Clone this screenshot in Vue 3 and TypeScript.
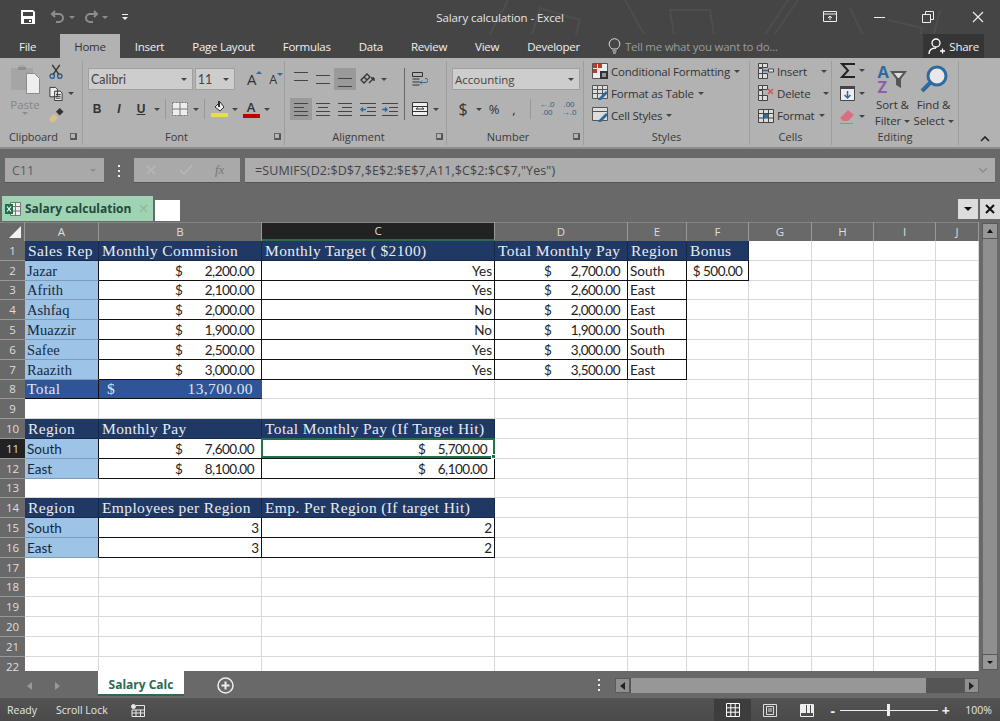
<script setup lang="ts">
type Col = 'A' | 'B' | 'C' | 'D' | 'E' | 'F' | 'G' | 'H' | 'I' | 'J';
type Kind = 'head' | 'name' | 'region' | 'text' | 'num' | 'acct' | 'bonus' | 'total' | 'totalAcct';
type Cell = { v: string; s: Kind };

const cols: Col[] = ['A', 'B', 'C', 'D', 'E', 'F', 'G', 'H', 'I', 'J'];
const rowNums = Array.from({ length: 22 }, (_, i) => i + 1);

const h = (v: string): Cell => ({ v, s: 'head' });
const n = (v: string): Cell => ({ v, s: 'name' });
const r = (v: string): Cell => ({ v, s: 'region' });
const t = (v: string): Cell => ({ v, s: 'text' });
const num = (v: string): Cell => ({ v, s: 'num' });
const a = (v: string): Cell => ({ v, s: 'acct' });

const sheet: Record<number, Partial<Record<Col, Cell>>> = {
  1: { A: h('Sales Rep'), B: h('Monthly Commision'), C: h('Monthly Target ( $2100)'), D: h('Total Monthly Pay'), E: h('Region'), F: h('Bonus') },
  2: { A: n('Jazar'), B: a('2,200.00'), C: num('Yes'), D: a('2,700.00'), E: t('South'), F: { v: '$ 500.00', s: 'bonus' } },
  3: { A: n('Afrith'), B: a('2,100.00'), C: num('Yes'), D: a('2,600.00'), E: t('East') },
  4: { A: n('Ashfaq'), B: a('2,000.00'), C: num('No'), D: a('2,000.00'), E: t('East') },
  5: { A: n('Muazzir'), B: a('1,900.00'), C: num('No'), D: a('1,900.00'), E: t('South') },
  6: { A: n('Safee'), B: a('2,500.00'), C: num('Yes'), D: a('3,000.00'), E: t('South') },
  7: { A: n('Raazith'), B: a('3,000.00'), C: num('Yes'), D: a('3,500.00'), E: t('East') },
  8: { A: { v: 'Total', s: 'total' }, B: { v: '13,700.00', s: 'totalAcct' } },
  10: { A: h('Region'), B: h('Monthly Pay'), C: h('Total Monthly Pay (If Target Hit)') },
  11: { A: r('South'), B: a('7,600.00'), C: a('5,700.00') },
  12: { A: r('East'), B: a('8,100.00'), C: a('6,100.00') },
  14: { A: h('Region'), B: h('Employees per Region'), C: h('Emp. Per Region (If target Hit)') },
  15: { A: r('South'), B: num('3'), C: num('2') },
  16: { A: r('East'), B: num('3'), C: num('2') },
};

const cellAt = (row: number, col: Col): Cell | undefined => sheet[row]?.[col];
const isSelected = (row: number, col: Col) => row === 11 && col === 'C';

const tabs = ['Insert', 'Page Layout', 'Formulas', 'Data', 'Review', 'View', 'Developer'];
</script>

<template>
  <div class="excel">
    <header class="titlebar">
      <svg class="doodles" viewBox="0 0 560 58" width="560" height="58" fill="none" stroke="#fff" stroke-opacity=".05" stroke-width="2">
        <path d="M70 34l18-34M120 8l40 12-10 34-40-12zM205 0l28 50M250 10h40l8 48h-40zM330 58l38-58M352 58l-10 4 2-12 34-50M430 8l24 50M520 10l-12 48M468 20l34 8-6 30" />
      </svg>
      <div class="qat">
        <svg width="16" height="16" viewBox="0 0 16 16" class="qat-save"><path fill="#fff" d="M1 1h12l2 2v12H1zM3 3v4h10V3zm1 7v4h8v-4zm5 1h2v2H9z" fill-rule="evenodd" /></svg>
        <svg width="16" height="14" viewBox="0 0 16 14" fill="none" stroke="#8d8d8d" stroke-width="2"><path d="M5 1L2 4l3 3M2 4h7a4 4 0 0 1 0 8H6" /></svg>
        <i class="caret caret--dim"></i>
        <svg width="16" height="14" viewBox="0 0 16 14" fill="none" stroke="#8d8d8d" stroke-width="2"><path d="M11 1l3 3-3 3M14 4H7a4 4 0 0 0 0 8h3" /></svg>
        <i class="caret caret--dim"></i>
        <span class="qat-more"><b></b><i class="caret caret--light"></i></span>
      </div>
      <div class="title">Salary calculation - Excel</div>
      <div class="win">
        <svg width="14" height="12" viewBox="0 0 14 12" fill="none" stroke="#eee"><path d="M.5.5h13v10H.5zM.5 3h13" /><path d="M7 9V5M5 7l2-2 2 2" /></svg>
        <span class="win-min"></span>
        <svg width="12" height="12" viewBox="0 0 12 12" fill="none" stroke="#eee"><path d="M.5 3.5h8v8h-8zM3.5 3V.5h8v8H9" /></svg>
        <svg width="14" height="14" viewBox="0 0 14 14" fill="none" stroke="#eee" stroke-width="1.2"><path d="M2 2l10 10M12 2L2 12" /></svg>
      </div>
    </header>

    <nav class="tabs">
      <span class="tab tab--file">File</span>
      <span class="tab tab--active">Home</span>
      <span v-for="tab in tabs" :key="tab" class="tab">{{ tab }}</span>
      <span class="tell">
        <svg width="13" height="17" viewBox="0 0 13 17" fill="none" stroke="#ddd"><path d="M4 11C2 9 1.2 8 1.2 6a5.3 5.3 0 0 1 10.6 0c0 2-.8 3-2.8 5zM4.5 13h4M5 15h3" /></svg>
        <span>Tell me what you want to do...</span>
      </span>
      <span class="share">
        <svg width="18" height="17" viewBox="0 0 18 17" fill="none" stroke="#fff" stroke-width="1.3"><circle cx="8" cy="5" r="4" /><path d="M1 16c0-4 3-6 7-6M12 13h5M14.5 10.5v5" /></svg>
        Share
      </span>
    </nav>

    <div class="ribbon">
      <section class="group g-clip">
        <div class="body body--clip">
          <div class="paste">
            <svg width="30" height="30" viewBox="0 0 30 30"><path fill="#a5a5a5" d="M1 4h7a4 3 0 0 1 8 0h7v22H1z" /><path fill="#8f8f8f" d="M8 3h8v3H8z" /><path fill="#eee" stroke="#8b8b8b" d="M16.5 9.5h8l5 5v15h-13z" /></svg>
            <span class="paste-label">Paste</span>
            <i class="caret caret--dim"></i>
          </div>
          <div class="clip-tools">
            <svg width="16" height="15" viewBox="0 0 16 16" fill="none" stroke="#2f5f88" stroke-width="1.5"><circle cx="4" cy="13" r="2.3" /><circle cx="12" cy="13" r="2.3" /><path stroke="#333" d="M5 11L12 1M11 11L4 1" /></svg>
            <span class="row-inline">
              <svg width="16" height="15" viewBox="0 0 16 16" fill="#eee" stroke="#333"><path d="M1.5 1.5h6l2 2v8h-8zM6.5 5.5h6l2 2v8h-8z" /><path d="M8 9h5M8 11h5M8 13h5" /></svg>
              <i class="caret"></i>
            </span>
            <svg width="16" height="15" viewBox="0 0 16 16"><path fill="#d9c08c" d="M1 11l5-5 4 4-4 5H2z" /><path fill="#333" d="M9 3l3-3 4 4-3 3-1 1-4-4z" /></svg>
          </div>
        </div>
        <div class="label label--clip">Clipboard<i class="launcher"></i></div>
      </section>

      <section class="group g-font">
        <div class="body body--font">
          <div class="row">
            <div class="combo combo--font"><span>Calibri</span><i class="caret"></i></div>
            <div class="combo combo--size"><span>11</span><i class="caret"></i></div>
            <span class="grow-a">A<i class="up"></i></span>
            <span class="grow-a grow-a--small">A<i class="up up--down"></i></span>
          </div>
          <div class="row row--second">
            <span class="btn fmt"><b>B</b></span>
            <span class="btn fmt"><b><em>I</em></b></span>
            <span class="btn fmt"><b><u>U</u></b></span>
            <span class="cbtn"><i class="caret"></i></span>
            <span class="sep sep--sm"></span>
            <span class="btn">
              <svg width="16" height="14" viewBox="0 0 16 14"><path fill="#eee" stroke="#777" stroke-dasharray="2 1" d="M.5.5h15v13H.5z" /><path stroke="#777" d="M8 0v14M0 7h16" /></svg>
            </span>
            <span class="cbtn"><i class="caret"></i></span>
            <span class="sep sep--sm"></span>
            <span class="btn btn--stack">
              <svg width="14" height="12" viewBox="0 0 14 12"><path fill="#eee" stroke="#333" d="M3 6l5-5 4 5-4 4z" /><path fill="#333" d="M6 0h2v6H6z" /></svg>
              <i class="swatch swatch--yellow"></i>
            </span>
            <span class="cbtn"><i class="caret"></i></span>
            <span class="btn btn--stack">
              <span class="font-a">A</span>
              <i class="swatch swatch--red"></i>
            </span>
            <span class="cbtn"><i class="caret"></i></span>
          </div>
        </div>
        <div class="label label--launch">Font<i class="launcher"></i></div>
      </section>

      <section class="group g-align">
        <div class="body body--align">
          <div class="align-left">
            <div class="row">
              <span class="btn"><i class="lines lines--top"></i></span>
              <span class="btn"><i class="lines lines--mid"></i></span>
              <span class="btn btn--on"><i class="lines lines--bot"></i></span>
              <span class="btn btn--gapped">
                <svg width="16" height="14" viewBox="0 0 16 14" fill="none" stroke="#333" stroke-width="1.3"><path d="M1 8l6-6 3 3-6 6zM4 5l3 3M9 11l5-5M14 6v3M14 6h-3" /></svg>
              </span>
              <span class="cbtn"><i class="caret"></i></span>
            </div>
            <div class="row row--second">
              <span class="btn btn--on"><i class="lines lines--left"></i></span>
              <span class="btn"><i class="lines lines--center"></i></span>
              <span class="btn"><i class="lines lines--right"></i></span>
              <span class="btn btn--gapped">
                <svg width="16" height="13" viewBox="0 0 16 13" fill="none" stroke="#444"><path d="M0 .5h16M7 4.5h9M7 8.5h9M0 12.5h16" /><path stroke="#2f6a9f" stroke-width="1.5" d="M6 6.5H1M3 4.5l-2 2 2 2" /></svg>
              </span>
              <span class="btn">
                <svg width="16" height="13" viewBox="0 0 16 13" fill="none" stroke="#444"><path d="M0 .5h16M7 4.5h9M7 8.5h9M0 12.5h16" /><path stroke="#2f6a9f" stroke-width="1.5" d="M0 6.5h5M3 4.5l2 2-2 2" /></svg>
              </span>
            </div>
          </div>
          <span class="sep sep--tall"></span>
          <div class="align-right">
            <span class="btn">
              <svg width="16" height="15" viewBox="0 0 16 15" fill="none" stroke="#333"><path d="M.5.5h10v4H.5zM.5 7h7M.5 10h7M.5 13h7" /><path stroke="#2f6a9f" d="M8 10.5h6a1.5 1.5 0 0 0 0-4h-1M10 8.5l-2 2 2 2" /></svg>
            </span>
            <span class="row-inline row-inline--down">
              <span class="btn">
                <svg width="16" height="14" viewBox="0 0 16 14" fill="#eee" stroke="#333"><path d="M.5.5h15v13H.5zM.5 4.5h15M.5 9.5h15" /><path d="M4 7h8M4 7l2-1.5M12 7l-2-1.5" /></svg>
              </span>
              <span class="cbtn"><i class="caret"></i></span>
            </span>
          </div>
        </div>
        <div class="label label--launch">Alignment<i class="launcher"></i></div>
      </section>

      <section class="group g-number">
        <div class="body body--number">
          <div class="combo combo--number"><span>Accounting</span><i class="caret"></i></div>
          <div class="row row--second">
            <span class="btn sym">$</span>
            <span class="cbtn"><i class="caret"></i></span>
            <span class="btn btn--narrow sym sym--small">%</span>
            <span class="btn btn--narrow sym sym--small">,</span>
            <span class="sep sep--num"></span>
            <span class="btn dec"><b>←.0</b><b>.00</b></span>
            <span class="btn dec"><b>.00</b><b>→.0</b></span>
          </div>
        </div>
        <div class="label label--launch">Number<i class="launcher"></i></div>
      </section>

      <section class="group g-styles">
        <div class="body body--list">
          <span class="item">
            <svg width="16" height="16" viewBox="0 0 16 16" fill="#eee" stroke="#555"><path d="M.5.5h15v15H.5z" /><path fill="#c0392b" stroke="none" d="M1 1h4v4H1zM1 6h4v4H1zM6 1h4v4H6z" /><path fill="#333" stroke="none" d="M8 8h8v8H8z" /><path stroke="#fff" d="M10 11h4M10 13h4" /></svg>
            Conditional Formatting<i class="caret caret--sm"></i>
          </span>
          <span class="item">
            <svg width="16" height="16" viewBox="0 0 16 16" fill="#ddd" stroke="#555"><path d="M.5.5h15v13H.5z" /><path d="M.5 4.5h15M.5 8.5h15M5.5.5v13M10.5.5v13" /><path fill="#2f6a9f" stroke="none" d="M7 13l7-7 2 2-7 7H6z" /></svg>
            Format as Table<i class="caret caret--sm"></i>
          </span>
          <span class="item">
            <svg width="16" height="16" viewBox="0 0 16 16" fill="#ddd" stroke="#555"><path d="M.5.5h15v13H.5z" /><path d="M.5 4.5h15" /><path fill="#2f6a9f" stroke="none" d="M7 13l7-7 2 2-7 7H6z" /></svg>
            Cell Styles<i class="caret caret--sm"></i>
          </span>
        </div>
        <div class="label">Styles</div>
      </section>

      <section class="group g-cells">
        <div class="body body--list">
          <span class="item">
            <svg width="16" height="16" viewBox="0 0 16 16" fill="#ddd" stroke="#444"><path d="M.5.5h4v4h-4zM.5 5.5h4v5h-4zM.5 10.5h4v5h-4zM4.5 10.5h5v5h-5zM4.5.5h5v4h-5z" /><path stroke="#2f6a9f" stroke-width="1.5" d="M5 7.5h5" /><path fill="#eee" d="M10.5 6h5v3h-5z" /></svg>
            Insert<i class="caret caret--far"></i>
          </span>
          <span class="item">
            <svg width="16" height="16" viewBox="0 0 16 16" fill="#ddd" stroke="#444"><path d="M.5.5h4v4h-4zM.5 5.5h4v5h-4zM.5 10.5h4v5h-4zM4.5 10.5h5v5h-5zM4.5.5h5v4h-5z" /><path stroke="#d9534f" stroke-width="1.5" d="M10 4l5 5M15 4l-5 5" /></svg>
            Delete<i class="caret caret--far2"></i>
          </span>
          <span class="item">
            <svg width="16" height="16" viewBox="0 0 16 16" fill="#ddd" stroke="#444"><path d="M.5 2.5h15v13H.5zM.5 6.5h15M.5 11h15M5.5 2.5v13M10.5 2.5v13" /><path fill="#2f6a9f" stroke="none" d="M6 7h4v4H6z" /></svg>
            Format<i class="caret caret--sm"></i>
          </span>
        </div>
        <div class="label">Cells</div>
      </section>

      <section class="group g-edit">
        <div class="body body--edit">
          <div class="edit-tools">
            <span class="row-inline">
              <svg width="15" height="15" viewBox="0 0 15 15" fill="none" stroke="#222" stroke-width="2"><path d="M14 2V1H2l6 6.5L2 14h12v-1" /></svg>
              <i class="caret"></i>
            </span>
            <span class="row-inline">
              <svg width="15" height="15" viewBox="0 0 15 15"><path fill="#eee" stroke="#444" d="M.5.5h14v14H.5z" /><path fill="#444" d="M0 0h15v3H0z" /><path stroke="#2f6a9f" stroke-width="1.5" fill="none" d="M7.5 5v7M4.5 9l3 3 3-3" /></svg>
              <i class="caret"></i>
            </span>
            <span class="row-inline">
              <svg width="15" height="15" viewBox="0 0 15 15"><path fill="#d9707f" d="M0 9l8-8 6 5-6 6H3z" /><path stroke="#d9707f" d="M0 14.5h13" /></svg>
              <i class="caret"></i>
            </span>
          </div>
          <div class="big">
            <span class="sort-icon">
              <span class="az"><b class="az-a">A</b><b class="az-z">Z</b></span>
              <svg width="17" height="17" viewBox="0 0 17 17"><path fill="#555" d="M0 0h17l-6 8v9l-5-3V8z" /><path fill="#ddd" d="M4 2h9l-4 5H8z" /></svg>
            </span>
            <span class="big-text">Sort &amp;</span>
            <span class="big-text">Filter<i class="caret caret--sm"></i></span>
          </div>
          <div class="big">
            <svg class="big-icon" width="30" height="30" viewBox="0 0 30 30" fill="none"><path stroke="#2f6a9f" stroke-width="4" d="M11 19L3 27" /><circle cx="18" cy="12" r="9" fill="#e8e8e8" stroke="#2f6a9f" stroke-width="3" /></svg>
            <span class="big-text">Find &amp;</span>
            <span class="big-text">Select<i class="caret caret--sm"></i></span>
          </div>
        </div>
        <div class="label">Editing</div>
      </section>

      <span class="collapse"><svg width="10" height="6" viewBox="0 0 10 6" fill="none" stroke="#222" stroke-width="1.6"><path d="M1 5l4-4 4 4" /></svg></span>
    </div>

    <div class="formula">
      <div class="namebox"><span>C11</span><i class="caret caret--dim"></i></div>
      <span class="dots"><b></b><b></b><b></b></span>
      <div class="fxbox">
        <svg width="12" height="12" viewBox="0 0 12 12" fill="none" stroke="#b8b8b8" stroke-width="1.5"><path d="M2 2l8 8M10 2l-8 8" /></svg>
        <svg width="14" height="12" viewBox="0 0 14 12" fill="none" stroke="#b8b8b8" stroke-width="1.5"><path d="M1 6l4 4 8-9" /></svg>
        <em>fx</em>
      </div>
      <div class="fbar"><span>=SUMIFS(D2:$D$7,$E$2:$E$7,A11,$C$2:$C$7,"Yes")</span><svg width="10" height="6" viewBox="0 0 10 6" fill="none" stroke="#8c8c8c" stroke-width="1.4"><path d="M1 1l4 4 4-4" /></svg></div>
    </div>

    <div class="docbar">
      <div class="doctab">
        <svg width="16" height="14" viewBox="0 0 16 14"><path fill="#eee" stroke="#777" d="M5.5.5h10v13h-10z" /><path stroke="#777" d="M10.5 1v12M6 4.5h9M6 9h9" /><path fill="#1e7145" d="M0 2h8v10H0z" /><path stroke="#fff" stroke-width="1.2" d="M2 4.5l4 5M6 4.5l-4 5" /></svg>
        <span class="doctab-name">Salary calculation</span>
        <svg class="doctab-x" width="9" height="9" viewBox="0 0 9 9" fill="none" stroke="#8dbca0" stroke-width="1.5"><path d="M1 1l7 7M8 1L1 8" /></svg>
      </div>
      <div class="newdoc"></div>
      <div class="docbtns">
        <span class="docbtn"><i class="caret caret--black"></i></span>
        <span class="docbtn"><svg width="10" height="10" viewBox="0 0 10 10" fill="none" stroke="#111" stroke-width="2"><path d="M1 1l8 8M9 1L1 9" /></svg></span>
      </div>
    </div>

    <div class="sheetwrap">
      <div class="grid">
        <div class="colhead colhead--corner"><i></i></div>
        <div v-for="col in cols" :key="col" class="colhead" :class="{ 'colhead--active': col === 'C' }">{{ col }}</div>
        <template v-for="row in rowNums" :key="row">
          <div class="rowhead" :class="{ 'rowhead--active': row === 11 }">{{ row }}</div>
          <div
            v-for="col in cols"
            :key="col"
            class="cell"
            :class="[cellAt(row, col) ? `cell--${cellAt(row, col)!.s}` : '', `cell--col-${col}`]"
          >
            <template v-if="cellAt(row, col)?.s === 'acct' || cellAt(row, col)?.s === 'totalAcct'">
              <span>$</span><span class="amount">{{ cellAt(row, col)!.v }}</span>
            </template>
            <template v-else>{{ cellAt(row, col)?.v }}</template>
            <span v-if="isSelected(row, col)" class="selection"><i></i></span>
          </div>
        </template>
      </div>
      <div class="vscroll">
        <span class="sbtn"><i class="caret caret--up"></i></span>
        <span class="vtrack"></span>
        <span class="sbtn"><i class="caret caret--black"></i></span>
      </div>
    </div>

    <div class="sheetbar">
      <span class="navarrows"><i class="tri tri--l"></i><i class="tri tri--r"></i></span>
      <span class="sheettab">Salary Calc</span>
      <svg class="addsheet" width="17" height="17" viewBox="0 0 17 17" fill="none" stroke="#eee" stroke-width="1.5"><circle cx="8.5" cy="8.5" r="7.5" /><path stroke-width="2" d="M8.5 4.5v8M4.5 8.5h8" /></svg>
      <span class="dots dots--bar"><b></b><b></b><b></b></span>
      <div class="hscroll">
        <span class="hbtn"><i class="tri tri--dark-l"></i></span>
        <span class="hthumb"></span>
        <span class="hrest"></span>
        <span class="hbtn"><i class="tri tri--dark-r"></i></span>
      </div>
    </div>

    <footer class="status">
      <span class="st-text">Ready</span>
      <span class="st-text st-text--lock">Scroll Lock</span>
      <svg class="st-macro" width="14" height="13" viewBox="0 0 14 13" fill="none" stroke="#e8e8e8"><circle cx="2.5" cy="2.5" r="2" fill="#e8e8e8" /><path d="M5 1.5h8.5v11H1V6h12.5M1 9h12.5M5 6v6.5M9.5 6v6.5" /></svg>
      <div class="views">
        <span class="view view--on">
          <svg width="14" height="14" viewBox="0 0 14 14" fill="none" stroke="#fff"><path d="M.5.5h13v13H.5zM.5 4.8h13M.5 9.2h13M4.8.5v13M9.2.5v13" /></svg>
        </span>
        <span class="view">
          <svg width="14" height="13" viewBox="0 0 14 13" fill="none" stroke="#ddd"><path d="M.5.5h13v12H.5z" /><path d="M3.5 2.5h7v8h-7zM5 5h4M5 7h4" /></svg>
        </span>
        <span class="view">
          <svg width="14" height="13" viewBox="0 0 14 13"><path fill="none" stroke="#eee" d="M.5.5h13v12H.5z" /><path fill="#eee" d="M1 1h5v8H1zM7 1h3v8H7zM11 1h2v8h-2z" /></svg>
        </span>
      </div>
      <div class="zoom">
        <span class="zbtn">-</span>
        <span class="slider"><i></i></span>
        <span class="zbtn">+</span>
      </div>
      <span class="pct">100%</span>
    </footer>
  </div>
</template>

<style>
html,
body {
  margin: 0;
  background: #696969;
}
</style>

<style scoped>
.excel {
  position: relative;
  width: 1000px;
  height: 721px;
  display: flex;
  flex-direction: column;
  overflow: hidden;
  background: #696969;
  font-family: 'Open Sans', 'Liberation Sans', sans-serif;
  font-size: 12px;
  color: #333;
}

/* TITLE BAR */
.titlebar {
  position: relative;
  height: 34px;
  flex: none;
  display: grid;
  grid-template-columns: 1fr auto 1fr;
  align-items: center;
  background: #454545;
}
.doodles {
  position: absolute;
  top: 0;
  right: 20px;
}
.qat {
  display: flex;
  align-items: center;
  gap: 3px;
  padding-left: 20px;
}
.qat-save {
  margin-right: 11px;
}
.qat .caret--dim + svg {
  margin-left: 5px;
}
.qat-more {
  display: flex;
  flex-direction: column;
  align-items: center;
  gap: 2px;
  margin-left: 11px;
}
.qat-more b {
  width: 6px;
  height: 1px;
  background: #eee;
}
.title {
  color: #e6e6e6;
  font-size: 11.5px;
  letter-spacing: -0.1px;
  position: relative;
}
.win {
  position: relative;
  display: flex;
  justify-content: flex-end;
  align-items: center;
  gap: 37px;
  padding-right: 15px;
}
.win-min {
  width: 11px;
  height: 1px;
  background: #eee;
}

/* TABS */
.tabs {
  position: relative;
  height: 24px;
  flex: none;
  display: flex;
  align-items: stretch;
  background: #454545;
  color: #f0f0f0;
  font-size: 11.5px;
  letter-spacing: -0.25px;
}
.tab {
  display: flex;
  align-items: center;
  padding: 0 14px;
}
.tab--file {
  margin-left: 5px;
  margin-right: 10px;
}
.tab--active {
  padding: 0 14px;
  margin-right: 1px;
  background: #b2b2b2;
  color: #333;
}
.tell {
  display: flex;
  align-items: center;
  gap: 4px;
  margin-left: 14px;
  color: #9b9b9b;
}
.share {
  display: flex;
  align-items: center;
  gap: 3px;
  margin-left: auto;
  margin-right: 16px;
  padding: 0 5px;
  background: #353535;
  color: #f2f2f2;
}

/* RIBBON */
.ribbon {
  position: relative;
  height: 91px;
  flex: none;
  display: flex;
  box-sizing: border-box;
  padding-top: 3px;
  background: #b2b2b2;
  border-bottom: 2px solid #8d8d8d;
}
.group {
  flex: none;
  display: flex;
  flex-direction: column;
  height: 84px;
  box-sizing: border-box;
  border-right: 1px solid #9e9e9e;
}
.g-clip { width: 83px; }
.g-font { width: 202px; }
.g-align { width: 162px; }
.g-number { width: 137px; }
.g-styles { width: 166px; }
.g-cells { width: 82px; }
.g-edit { width: 127px; }
.body {
  flex: 1;
  min-height: 0;
}
.label {
  position: relative;
  height: 16px;
  line-height: 16px;
  text-align: center;
  font-size: 11px;
  color: #3a3a3a;
}
.label--launch {
  padding-right: 14px;
}
.label--clip {
  text-align: left;
  padding-left: 9px;
  letter-spacing: -0.1px;
}
.launcher {
  position: absolute;
  right: 3px;
  top: 4px;
  width: 6px;
  height: 6px;
  border-left: 1px solid #666;
  border-top: 1px solid #666;
  box-shadow: inset -3px -3px 0 -1px #555;
}
.label--clip .launcher {
  right: 5px;
}
.collapse {
  position: absolute;
  right: 10px;
  bottom: 5px;
  line-height: 0;
}
.row {
  display: flex;
  align-items: center;
  height: 22px;
}
.row--second {
  margin-top: 8px;
}
.row-inline {
  display: flex;
  align-items: center;
  gap: 4px;
}
.btn {
  flex: none;
  width: 22px;
  height: 22px;
  display: flex;
  align-items: center;
  justify-content: center;
}
.btn--narrow {
  width: 20px;
}
.btn--on {
  background: #9a9a9a;
}
.btn--gapped {
  margin-left: 1px;
}
.btn--stack {
  flex-direction: column;
  gap: 0;
}
.cbtn {
  flex: none;
  width: 10px;
  display: flex;
  justify-content: center;
}
.sep {
  flex: none;
  width: 1px;
  background: #989898;
}
.sep--sm {
  height: 20px;
  margin: 0 3px;
}
.sep--tall {
  height: 52px;
  margin: 0 4px 0 3px;
  background: #666;
}
.sep--num {
  height: 20px;
  margin: 0 5px 0 6px;
}

/* CARETS */
.caret {
  display: inline-block;
  width: 0;
  height: 0;
  border-left: 3px solid transparent;
  border-right: 3px solid transparent;
  border-top: 3px solid #444;
}
.caret--dim { border-top-color: #8d8d8d; }
.caret--light { border-top-color: #eee; }
.caret--black { border-top-color: #111; }
.caret--up {
  border-top: 0;
  border-bottom: 4px solid #111;
}

/* CLIPBOARD */
.body--clip {
  display: flex;
  padding: 3px 0 0 9px;
}
.paste {
  width: 32px;
  display: flex;
  flex-direction: column;
  align-items: center;
  color: #868686;
  font-size: 11.5px;
}
.paste-label {
  margin-top: 3px;
}
.clip-tools {
  display: flex;
  flex-direction: column;
  gap: 7px;
  padding-left: 7px;
}

/* FONT */
.body--font {
  padding: 7px 0 0 3px;
}
.combo {
  display: flex;
  align-items: center;
  justify-content: space-between;
  box-sizing: border-box;
  height: 22px;
  padding: 0 5px 0 2px;
  background: #cdcdcd;
  border: 1px solid #a0a0a0;
  font-family: 'Lato', sans-serif;
  font-size: 12.5px;
  color: #444;
}
.combo--font {
  width: 107px;
  margin-left: 2px;
}
.combo--size {
  width: 41px;
  margin: 0 6px 0 2px;
}
.combo--number {
  width: 128px;
  font-family: 'Open Sans', sans-serif;
  font-size: 11.5px;
}
.grow-a {
  position: relative;
  width: 22px;
  text-align: center;
  font-size: 15px;
  color: #333;
}
.grow-a--small {
  font-size: 12.5px;
}
.up {
  position: absolute;
  right: 1px;
  top: 2px;
  border-left: 3px solid transparent;
  border-right: 3px solid transparent;
  border-bottom: 3px solid #2f6a9f;
}
.up--down {
  border-bottom: 0;
  border-top: 3px solid #2f6a9f;
}
.fmt {
  font-family: 'Liberation Sans', sans-serif;
  font-size: 12px;
}
.swatch {
  width: 17px;
  height: 4px;
}
.swatch--yellow { background: #e6e23a; }
.swatch--red { background: #c00000; }
.font-a {
  font-size: 13px;
  line-height: 13px;
  font-weight: 600;
}

/* ALIGNMENT */
.body--align {
  display: flex;
  padding: 7px 0 0 5px;
}
.lines {
  display: block;
  width: 14px;
  height: 9px;
  box-sizing: border-box;
  border-top: 1px solid #444;
  border-bottom: 1px solid #444;
}
.lines--top { margin-bottom: 6px; }
.lines--bot { margin-top: 6px; }
.lines--left,
.lines--center,
.lines--right {
  height: 13px;
  background: linear-gradient(#444, #444) 0 3px / 10px 1px no-repeat, linear-gradient(#444, #444) 0 7px / 14px 1px no-repeat;
  border-top: 1px solid #444;
  border-bottom: 1px solid #444;
}
.lines--center {
  background-position: 2px 3px, 0 7px;
}
.lines--right {
  background-position: 4px 3px, 0 7px;
}
.align-right {
  display: flex;
  flex-direction: column;
  align-items: flex-start;
  gap: 8px;
}
.row-inline--down {
  gap: 0;
}

/* NUMBER */
.body--number {
  padding: 7px 0 0 5px;
}
.sym {
  font-size: 16px;
  color: #333;
}
.sym--small {
  font-size: 13px;
}
.dec {
  flex-direction: column;
  font-family: 'Liberation Sans', sans-serif;
  font-size: 8px;
  line-height: 8px;
  color: #2f5f88;
}
.dec b {
  font-weight: 400;
}

/* STYLES AND CELLS */
.body--list {
  display: flex;
  flex-direction: column;
  padding-left: 8px;
  margin-top: -1px;
}
.item {
  display: flex;
  align-items: center;
  gap: 3px;
  height: 22px;
  font-size: 11.5px;
  letter-spacing: -0.2px;
  white-space: nowrap;
}
.item .caret {
  margin-left: 1px;
}
.item .caret--far { margin-left: 11px; }
.item .caret--far2 { margin-left: 9px; }

/* EDITING */
.body--edit {
  display: flex;
}
.edit-tools {
  width: 40px;
  display: flex;
  flex-direction: column;
  gap: 8px;
  padding: 2px 0 0 8px;
  box-sizing: border-box;
}
.big {
  width: 41px;
  display: flex;
  flex-direction: column;
  align-items: center;
  font-size: 11.5px;
  line-height: 16px;
  letter-spacing: -0.1px;
  white-space: nowrap;
}
.big-icon,
.sort-icon {
  flex: none;
  height: 30px;
  margin: 3px 0 3px;
}
.big-text {
  flex: none;
}
.big-text .caret {
  margin-left: 3px;
  vertical-align: 2px;
}
.sort-icon {
  width: 30px;
  display: flex;
  align-items: center;
}
.az {
  display: flex;
  flex-direction: column;
  width: 12px;
  font-size: 16.5px;
  line-height: 15px;
}
.az-a { color: #2f6a9f; }
.az-z { color: #8d5fa8; }

/* FORMULA BAR */
.formula {
  height: 47px;
  flex: none;
  display: flex;
  align-items: flex-start;
  box-sizing: border-box;
  padding: 9px 5px 0;
}
.namebox,
.fxbox,
.fbar {
  height: 25px;
  box-sizing: border-box;
  display: flex;
  align-items: center;
  background: #a9a9a9;
  border-bottom: 1px solid #555;
}
.namebox {
  width: 99px;
  justify-content: space-between;
  padding: 0 8px 0 7px;
  color: #5c5c5c;
  font-size: 12.5px;
}
.dots {
  display: flex;
  flex-direction: column;
  align-items: center;
  gap: 3px;
  width: 30px;
  padding-top: 7px;
}
.dots b {
  width: 2px;
  height: 2px;
  background: #eee;
}
.fxbox {
  width: 106px;
  gap: 22px;
  padding-left: 11px;
  color: #777;
}
.fxbox em {
  font-family: 'Liberation Serif', serif;
  font-size: 13px;
}
.fbar {
  flex: 1;
  margin-left: 5px;
  justify-content: space-between;
  padding: 0 7px 0 10px;
  font-size: 12.5px;
  letter-spacing: 0.1px;
  color: #444;
  background: #acacac;
}

/* DOCUMENT TAB */
.docbar {
  height: 26px;
  flex: none;
  display: flex;
  align-items: flex-end;
  padding-left: 2px;
}
.doctab {
  width: 151px;
  height: 25px;
  margin-bottom: 1px;
  box-sizing: border-box;
  display: flex;
  align-items: center;
  gap: 4px;
  padding-left: 3px;
  background: #a0d2b4;
}
.doctab-name {
  font-weight: 700;
  font-size: 12px;
  color: #214a3c;
  white-space: nowrap;
}
.doctab-x {
  margin-left: 4px;
}
.newdoc {
  width: 25px;
  height: 21px;
  margin: 0 0 1px 2px;
  background: #fff;
}
.docbtns {
  display: flex;
  gap: 2px;
  margin-left: auto;
  margin-bottom: 3px;
}
.docbtn {
  width: 20px;
  height: 20px;
  display: flex;
  align-items: center;
  justify-content: center;
  background: #dcdcdc;
}
.docbtn .caret {
  border-left-width: 4px;
  border-right-width: 4px;
  border-top-width: 4px;
}

/* SHEET */
.sheetwrap {
  height: 449px;
  flex: none;
  display: flex;
  background: #696969;
}
.grid {
  width: 979px;
  height: 449px;
  flex: none;
  overflow: hidden;
  display: grid;
  grid-template-columns: 25px 74px 163px 233px 133px 59px 62px 63px 62px 62px 43px;
  grid-template-rows: 19px;
  grid-auto-rows: 19.8px;
  background: #fff;
  font-family: 'Lato', 'Liberation Sans', sans-serif;
  font-size: 13.5px;
  color: #222;
}
.colhead {
  display: flex;
  align-items: center;
  justify-content: center;
  box-sizing: border-box;
  background: #696969;
  border-right: 1px solid #999;
  box-shadow: inset 0 1px #858585;
  color: #dedede;
  font-family: 'Open Sans', sans-serif;
  font-size: 11.5px;
}
.colhead--corner {
  position: relative;
}
.colhead--corner i {
  position: absolute;
  right: 3px;
  bottom: 3px;
  border-left: 12px solid transparent;
  border-bottom: 12px solid #f2f2f2;
}
.colhead--active {
  background: #222;
  border-bottom: 2px solid #2c6a50;
}
.rowhead {
  display: flex;
  align-items: center;
  justify-content: center;
  box-sizing: border-box;
  padding-top: 1px;
  background: #696969;
  border-bottom: 1px solid #999;
  color: #dedede;
  font-family: 'Open Sans', sans-serif;
  font-size: 11.5px;
  line-height: 14px;
}
.rowhead--active {
  background: #222;
}
.cell {
  position: relative;
  display: flex;
  align-items: flex-end;
  box-sizing: border-box;
  padding: 0 2px;
  line-height: 18px;
  border-right: 1px solid #d9d9d9;
  border-bottom: 1px solid #d9d9d9;
  white-space: nowrap;
  min-width: 0;
}
.cell--head,
.cell--total,
.cell--totalAcct {
  font-family: 'Liberation Serif', serif;
  font-size: 15.5px;
  letter-spacing: 0.38px;
}
.cell--name {
  font-family: 'Liberation Serif', serif;
  font-size: 14.5px;
  letter-spacing: 0.1px;
}
.cell--head {
  padding-left: 3px;
  background: #1f3864;
  border-right-color: #16294a;
  border-bottom-color: #16294a;
  color: #e9edf4;
}
.cell--name,
.cell--region {
  background: #9dc3e6;
  color: #14283f;
  border-right: 1px solid #111;
  border-bottom-color: #7d9dbb;
}
.cell--text,
.cell--num,
.cell--acct,
.cell--bonus {
  border-right: 1px solid #111;
  border-bottom: 1px solid #111;
}
.cell--num {
  justify-content: flex-end;
}
.cell--acct {
  justify-content: flex-end;
  padding-right: 7px;
}
.cell--acct .amount {
  letter-spacing: -0.5px;
}
.cell--col-B.cell--acct { gap: 22px; }
.cell--col-C.cell--acct { gap: 12px; }
.cell--col-D.cell--acct { gap: 19px; }
.cell--bonus {
  justify-content: center;
  letter-spacing: -0.5px;
}
.cell--total,
.cell--totalAcct {
  background: #2f5597;
  color: #dfe6f2;
  border-bottom: 1px solid #111;
}
.cell--total {
  border-right-color: #111;
}
.cell--totalAcct {
  justify-content: space-between;
  padding: 0 8px;
  border-right: 1px solid #2f5597;
}
.selection {
  position: absolute;
  inset: -1px -1px 0 -1px;
  border: 2px solid #21714c;
  pointer-events: none;
}
.selection i {
  position: absolute;
  right: -3px;
  bottom: -3px;
  width: 5px;
  height: 5px;
  background: #21714c;
  border: 1px solid #fff;
  box-sizing: border-box;
}

/* VERTICAL SCROLL */
.vscroll {
  flex: 1;
  display: flex;
  flex-direction: column;
  align-items: center;
  gap: 1px;
  padding: 2px 0 2px;
  box-sizing: border-box;
}
.sbtn {
  width: 14px;
  height: 14px;
  flex: none;
  display: flex;
  align-items: center;
  justify-content: center;
  background: #979797;
  box-shadow: 0 0 0 1px #5a5a5a;
}
.vtrack {
  flex: 1;
  width: 14px;
  background: #8f8f8f;
}

/* SHEET BAR */
.sheetbar {
  height: 28px;
  flex: none;
  display: flex;
  align-items: flex-start;
  box-sizing: border-box;
  border-bottom: 1px solid #555;
}
.navarrows {
  display: flex;
  gap: 23px;
  width: 98px;
  padding: 11px 0 0 27px;
  box-sizing: border-box;
}
.tri {
  border-top: 4px solid transparent;
  border-bottom: 4px solid transparent;
}
.tri--l { border-right: 5px solid #999; }
.tri--r { border-left: 5px solid #999; }
.tri--dark-l { border-right: 5px solid #222; }
.tri--dark-r { border-left: 5px solid #222; }
.sheettab {
  width: 86px;
  height: 23px;
  line-height: 27px;
  text-align: center;
  background: #fff;
  border-bottom: 2px solid #2c6a50;
  color: #2c6a50;
  font-weight: 700;
  font-size: 12px;
  white-space: nowrap;
}
.addsheet {
  margin: 6px 0 0 33px;
}
.dots--bar {
  width: 6px;
  margin-left: 362px;
  padding-top: 8px;
}
.hscroll {
  display: flex;
  width: 364px;
  height: 15px;
  margin: 7px 0 0 13px;
  background: #555;
}
.hbtn {
  width: 15px;
  flex: none;
  display: flex;
  align-items: center;
  justify-content: center;
  background: #8f8f8f;
  box-sizing: border-box;
  border: 1px solid #5a5a5a;
}
.hthumb {
  width: 295px;
  flex: none;
  margin-left: 1px;
  background: #979797;
  border-right: 1px solid #555;
}
.hrest {
  flex: 1;
}

/* STATUS BAR */
.status {
  flex: 1;
  display: flex;
  align-items: center;
  background: linear-gradient(#525252, #4a4a4a);
  color: #e6e6e6;
  font-size: 10.5px;
}
.st-text {
  margin-left: 7px;
}
.st-text--lock {
  margin-left: 19px;
}
.st-macro {
  margin-left: 23px;
}
.views {
  display: flex;
  align-self: stretch;
  margin-left: auto;
}
.view {
  width: 37px;
  display: flex;
  align-items: center;
  justify-content: center;
}
.view--on {
  background: #3d3d3d;
}
.zoom {
  display: flex;
  align-items: center;
  margin-left: 3px;
  gap: 3px;
}
.zbtn {
  width: 9px;
  text-align: center;
  font-size: 14px;
  font-weight: 700;
  color: #eee;
}
.slider {
  position: relative;
  width: 98px;
  height: 1px;
  background: #eee;
}
.slider i {
  position: absolute;
  left: 47px;
  top: -6px;
  width: 3px;
  height: 12px;
  background: #eee;
}
.pct {
  margin: 0 8px 0 15px;
  color: #e6e6e6;
}
</style>
